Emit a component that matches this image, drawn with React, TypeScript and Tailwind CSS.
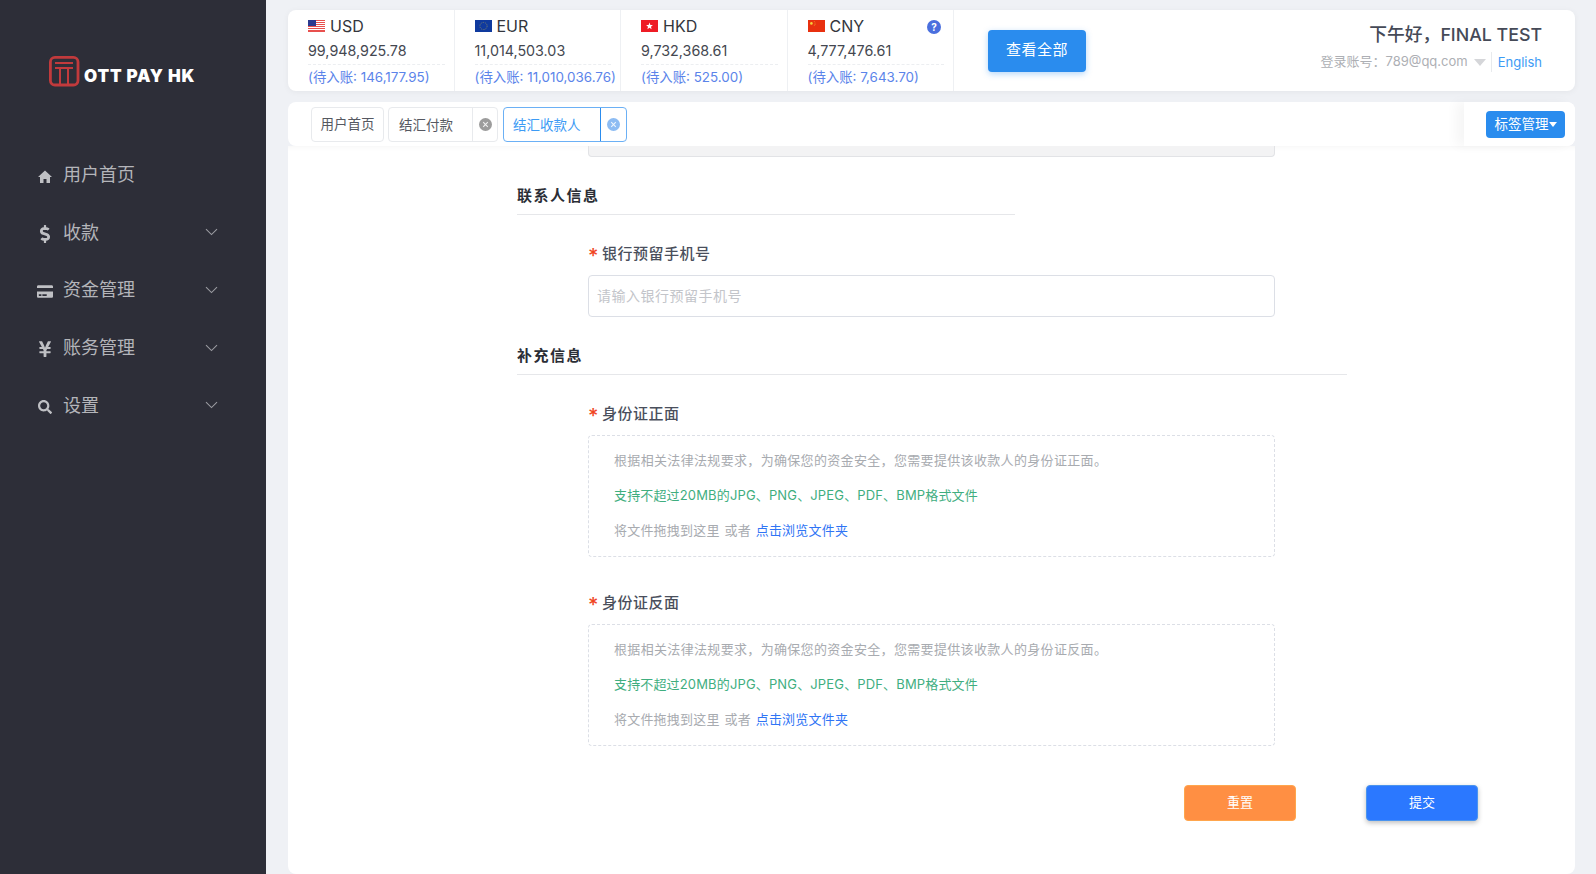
import React from "react";
import { FaDollarSign, FaCreditCard, FaYenSign, FaSearch } from "react-icons/fa";

const FONT = "[font-family:Inter,'Noto_Sans_CJK_SC',sans-serif]";

const Chevron = () => (
  <svg width="13" height="8" viewBox="0 0 13 8" fill="none" stroke="#9a9ba1" strokeWidth="1.1" className="ml-auto">
    <path d="M1 1.2 L6.5 6.6 L12 1.2" />
  </svg>
);

const Home = () => (
  <svg width="14" height="13" viewBox="0 0 14 13" fill="currentColor">
    <path d="M7 0.5 L14 7 H12 V13 H8.5 V9 H5.5 V13 H2 V7 H0 Z" />
  </svg>
);

const UsFlag = () => (
  <svg width="17" height="12" viewBox="0 0 17 12">
    <rect width="17" height="12" fill="#fff" />
    {[0, 2, 4, 6, 8, 10].map((y) => <rect key={y} y={y} width="17" height="1" fill="#e8504e" />)}
    <rect y="11" width="17" height="1" fill="#e8504e" />
    <rect width="8" height="6" fill="#2b3a8f" />
  </svg>
);
const EuFlag = () => (
  <svg width="17" height="12" viewBox="0 0 17 12">
    <rect width="17" height="12" fill="#0f3a9e" />
    <circle cx="8.5" cy="6" r="3.6" fill="none" stroke="#c9b44a" strokeWidth="0.6" strokeDasharray="0.8 1" />
  </svg>
);
const HkFlag = () => (
  <svg width="17" height="12" viewBox="0 0 17 12">
    <rect width="17" height="12" fill="#ee1c25" />
    <path d="M8.5 2.6 L9.4 5 L11.9 5.1 L10 6.7 L10.6 9.2 L8.5 7.8 L6.4 9.2 L7 6.7 L5.1 5.1 L7.6 5 Z" fill="#fff" />
  </svg>
);
const CnFlag = () => (
  <svg width="17" height="12" viewBox="0 0 17 12">
    <rect width="17" height="12" fill="#e8300f" />
    <circle cx="3.4" cy="3.4" r="1.3" fill="#f6d33c" />
    <circle cx="6.2" cy="1.7" r="0.4" fill="#f6d33c" />
    <circle cx="7" cy="3" r="0.4" fill="#f6d33c" />
    <circle cx="7" cy="4.5" r="0.4" fill="#f6d33c" />
    <circle cx="6.2" cy="5.7" r="0.4" fill="#f6d33c" />
  </svg>
);

const Logo = () => (
  <svg width="31" height="31" viewBox="0 0 31 31" fill="none" stroke="#c13a3c">
    <rect x="1.4" y="1.4" width="27.6" height="27.6" rx="4.5" strokeWidth="2.8" />
    <path d="M6 7 H24" strokeWidth="2" />
    <path d="M6 12 H24" strokeWidth="2" />
    <path d="M11 12 V28 M19 12 V28" strokeWidth="2" />
  </svg>
);

const Close = ({ bg }: { bg: string }) => (
  <svg width="13" height="13" viewBox="0 0 13 13">
    <circle cx="6.5" cy="6.5" r="6.5" fill={bg} />
    <path d="M4.2 4.2 L8.8 8.8 M8.8 4.2 L4.2 8.8" stroke="#fff" strokeOpacity="0.85" strokeWidth="1.1" />
  </svg>
);

const menu = [
  { label: "用户首页", icon: <Home />, arrow: false },
  { label: "收款", icon: <FaDollarSign size={18} />, arrow: true },
  { label: "资金管理", icon: <FaCreditCard size={17} />, arrow: true },
  { label: "账务管理", icon: <FaYenSign size={18} />, arrow: true },
  { label: "设置", icon: <FaSearch size={14} />, arrow: true },
];

const currencies = [
  { code: "USD", flag: <UsFlag />, amount: "99,948,925.78", pending: "(待入账: 146,177.95)" },
  { code: "EUR", flag: <EuFlag />, amount: "11,014,503.03", pending: "(待入账: 11,010,036.76)" },
  { code: "HKD", flag: <HkFlag />, amount: "9,732,368.61", pending: "(待入账: 525.00)" },
  { code: "CNY", flag: <CnFlag />, amount: "4,777,476.61", pending: "(待入账: 7,643.70)" },
];

const Label = ({ text, className }: { text: string; className: string }) => (
  <div className={`flex items-center h-[22px] pl-[71px] text-[15px] tracking-[0.5px] font-medium text-[#4a4f5c] ${className}`}>
    <span className="w-[14px] text-[#f0451f] text-[20px] leading-none mt-[3px]">*</span>
    <span>{text}</span>
  </div>
);

const Drop = ({ side }: { side: string }) => (
  <div className="ml-[71px] mt-[10px] w-[687px] h-[122px] rounded border border-dashed border-[#dcdfe6] pl-[25px] pt-[7px] text-[13px] leading-[35px] text-[#a8abb0]">
    <div className="tracking-[0.33px]">根据相关法律法规要求，为确保您的资金安全，您需要提供该收款人的身份证{side}。</div>
    <div className="text-[#3fae7f] tracking-[0.15px]">支持不超过20MB的JPG、PNG、JPEG、PDF、BMP格式文件</div>
    <div className="tracking-[0.2px] [word-spacing:1px]">
      将文件拖拽到这里 或者 <span className="text-[#2f74f5]">点击浏览文件夹</span>
    </div>
  </div>
);

export default function App() {
  return (
    <div className={`flex w-[1596px] h-[874px] overflow-hidden bg-[#eff1f5] ${FONT}`}>
      <aside className="w-[266px] shrink-0 bg-[#2d2e38] pl-[37px] pr-[48px]">
        <div className="flex items-center h-[31px] mt-[56px] ml-[12px]">
          <Logo />
          <span className="ml-[4px] mt-[11px] text-[17px] font-black text-white tracking-[0.8px] whitespace-nowrap">
            OTT PAY HK
          </span>
        </div>
        <nav className="mt-[59px]">
          {menu.map((m) => (
            <div key={m.label} className="flex items-center h-[57.6px] text-[#b4b5ba]">
              <span className="w-[16px] flex justify-center text-[#bfc0c4] mt-[3px]">{m.icon}</span>
              <span className="ml-[10px] text-[18px]">{m.label}</span>
              {m.arrow && <Chevron />}
            </div>
          ))}
        </nav>
      </aside>

      <main className="w-[1287px] ml-[22px] pt-[10px] flex flex-col">
        <div className="flex h-[81px] bg-white rounded-lg shadow-[0_1px_6px_rgba(0,0,0,0.05)]">
          {currencies.map((c, i) => (
            <div key={c.code} className="relative w-[166.5px] shrink-0 border-r border-[#eef0f3] pl-[20px] pr-[9px]">
              <div className="flex items-center h-[20px] mt-[6px] gap-[5px] text-[16px] text-[#33363d]">
                {c.flag}
                <span>{c.code}</span>
              </div>
              <div className="mt-[4px] h-[21px] text-[14.3px] leading-[21px] text-[#444750] whitespace-nowrap">{c.amount}</div>
              <div className="mt-[3px] pt-[2px] border-t border-dashed border-[#eceef1] text-[13.4px] leading-[20px] text-[#5b84ea] whitespace-nowrap">
                {c.pending}
              </div>
              {i === 3 && (
                <span className="absolute right-[12px] top-[10px] w-[14px] h-[14px] rounded-full bg-[#4a6fde] text-white text-[10px] leading-[14px] font-bold text-center">
                  ?
                </span>
              )}
            </div>
          ))}
          <div className="flex items-center ml-[34px]">
            <button className="w-[98px] h-[42px] rounded bg-[#2a8cee] text-white text-[15px] tracking-[0.5px] shadow-[0_2px_6px_rgba(42,140,238,0.35)]">
              查看全部
            </button>
          </div>
          <div className="ml-auto pr-[33px] text-right">
            <div className="mt-[12px] text-[17.8px] leading-[26px] font-medium text-[#454a57]">下午好，FINAL TEST</div>
            <div className="flex items-center justify-end mt-[4px] h-[20px] text-[13px] text-[#adafb4]">
              <span>登录账号：789@qq.com</span>
              <span className="ml-[6px] w-0 h-0 border-x-[6px] border-x-transparent border-t-[7px] border-t-[#d5d6d9]" />
              <span className="ml-[5px] pl-[6px] border-l border-[#e8eaed] text-[#3d9bf5] leading-[20px]">English</span>
            </div>
          </div>
        </div>

        <div className="relative z-10 flex items-center h-[44px] mt-[11px] pl-[23px] bg-white rounded-lg">
          <div className="flex items-center justify-center w-[73px] h-[35px] rounded border border-[#e8eaed] text-[13.5px] text-[#555861]">用户首页</div>
          <div className="flex items-center w-[110px] h-[35px] ml-[4px] rounded border border-[#e8eaed] text-[13.5px] text-[#555861]">
            <span className="w-[84px] pl-[10px] h-full leading-[34px] border-r border-[#e8eaed]">结汇付款</span>
            <span className="flex-1 flex justify-center"><Close bg="#9c9c9c" /></span>
          </div>
          <div className="flex items-center w-[124px] h-[35px] ml-[5px] rounded border border-[#6bb0f5] text-[13.5px] text-[#3d9bf5]">
            <span className="w-[97px] pl-[9px] h-full leading-[34px] border-r border-[#2a8cee]">结汇收款人</span>
            <span className="flex-1 flex justify-center"><Close bg="#8dbcf3" /></span>
          </div>
          <div className="ml-auto flex items-center h-full w-[111px] pl-[22px] bg-white rounded-r-lg shadow-[-8px_0_12px_rgba(0,0,0,0.04)]">
            <button className="flex items-center justify-center w-[79px] h-[27px] rounded bg-[#2a8cee] text-white text-[13.5px]">
              标签管理
              <span className="w-0 h-0 border-x-[4px] border-x-transparent border-t-[5px] border-t-white" />
            </button>
          </div>
        </div>

        <div className="flex-1 bg-white rounded-b-lg pl-[229px] shadow-[inset_0_6px_6px_-6px_rgba(0,0,0,0.06)]">
          <div className="ml-[71px] w-[687px] h-[11px] bg-[#f3f3f4] border border-t-0 border-[#e2e3e6] rounded-b" />

          <div className="mt-[28px] w-[498px] pb-[7px] border-b border-[#e6e7ea] text-[15px] leading-[22px] font-semibold tracking-[1.5px] text-[#2b2e36]">联系人信息</div>
          <Label text="银行预留手机号" className="mt-[28px]" />
          <div className="ml-[71px] mt-[10px] w-[687px] h-[42px] rounded border border-[#dcdfe6] pl-[8px] text-[14px] tracking-[0.5px] leading-[40px] text-[#c3c5ca]">
            请输入银行预留手机号
          </div>

          <div className="mt-[28px] w-[830px] pb-[7px] border-b border-[#e6e7ea] text-[15px] leading-[22px] font-semibold tracking-[1.5px] text-[#2b2e36]">补充信息</div>
          <Label text="身份证正面" className="mt-[28px]" />
          <Drop side="正面" />
          <Label text="身份证反面" className="mt-[35px]" />
          <Drop side="反面" />

          <div className="flex mt-[39px] ml-[667px] gap-[70px]">
            <button className="w-[112px] h-[36px] rounded bg-[#ff8f43] border border-[#ffa64d] text-white text-[13px]">重置</button>
            <button className="w-[112px] h-[36px] rounded bg-[#2b78ff] border border-[#4a94ee] text-white text-[13px] shadow-[0_2px_5px_rgba(0,0,0,0.25)]">提交</button>
          </div>
        </div>
      </main>
    </div>
  );
}
